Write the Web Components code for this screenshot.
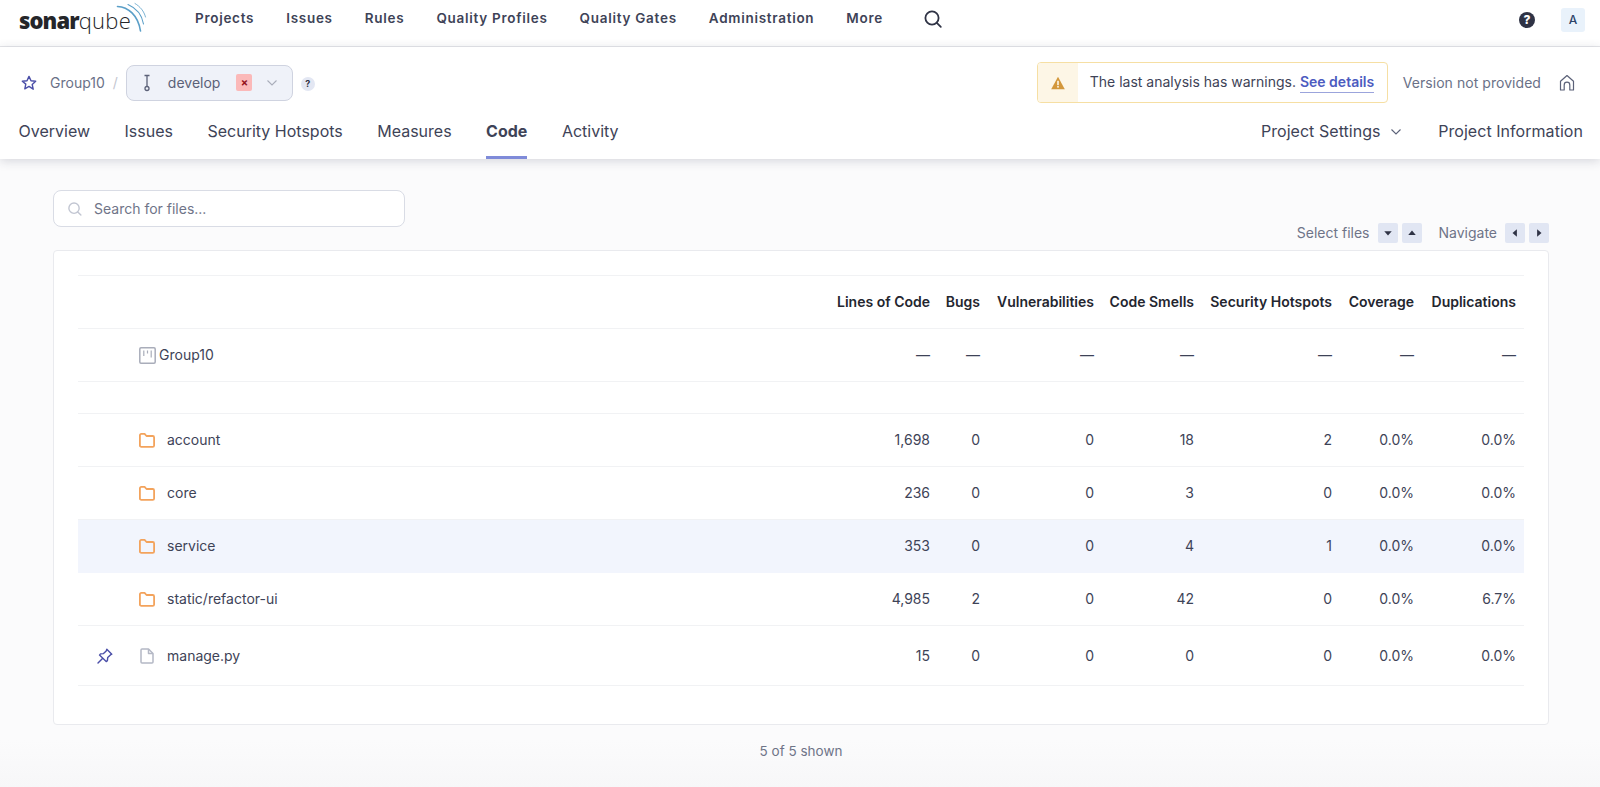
<!DOCTYPE html>
<html lang="en">
<head>
<meta charset="utf-8">
<title>Group10 - Code</title>
<style>
	html, body { margin: 0; height: 100%; }
	body {
		width: 1600px;
		height: 787px;
		overflow: hidden;
		background: linear-gradient(#fbfbfc 740px, #f7f7f8 787px);
		font-family: Inter, "Liberation Sans", sans-serif;
		color: #3e4357;
	}
</style>
</head>
<body>

<sq-navbar></sq-navbar>
<sq-project-header></sq-project-header>
<sq-code-page>
	<sq-search slot="search" placeholder="Search for files..."></sq-search>
	<sq-shortcuts slot="shortcuts"></sq-shortcuts>
	<sq-code-row kind="head" name="" values="Lines of Code|Bugs|Vulnerabilities|Code Smells|Security Hotspots|Coverage|Duplications"></sq-code-row>
	<sq-code-row kind="project" name="Group10" values="—|—|—|—|—|—|—"></sq-code-row>
	<sq-code-row kind="gap"></sq-code-row>
	<sq-code-row kind="folder" name="account" values="1,698|0|0|18|2|0.0%|0.0%"></sq-code-row>
	<sq-code-row kind="folder" name="core" values="236|0|0|3|0|0.0%|0.0%"></sq-code-row>
	<sq-code-row kind="folder" selected name="service" values="353|0|0|4|1|0.0%|0.0%"></sq-code-row>
	<sq-code-row kind="folder" name="static/refactor-ui" values="4,985|2|0|42|0|0.0%|6.7%"></sq-code-row>
	<sq-code-row kind="file" name="manage.py" values="15|0|0|0|0|0.0%|0.0%"></sq-code-row>
</sq-code-page>

<script>
	const ICONS = {
		search: '<svg width="20" height="20" viewBox="0 0 20 20" fill="none" stroke="currentColor" stroke-width="1.8" stroke-linecap="round"><circle cx="9" cy="9" r="6.6"/><path d="M13.8 13.8l4 4"/></svg>',
		star: '<svg width="16" height="16" viewBox="0 0 16 16" fill="none" stroke="#4b4fa8" stroke-width="1.4" stroke-linejoin="round"><path d="M8 1.400l2 4.400 4.700.5-3.500 3.200 1 4.700L8 11.400l-4.200 2.400 1-4.700L1.300 6.300 6 5.800z"/></svg>',
		branch: '<svg width="10" height="18" viewBox="0 0 10 18" fill="none" stroke="#5b6178" stroke-width="1.300"><path d="M2.500 1.500h5M5 1.500v11"/><circle cx="5" cy="14.500" r="2"/></svg>',
		chevron: '<svg width="12" height="8" viewBox="0 0 12 8" fill="none" stroke="currentColor" stroke-width="1.100"><path d="M1.500 1.500L6 6l4.500-4.500"/></svg>',
		warning: '<svg width="14" height="14" viewBox="0 0 14 14"><path d="M7 .8L13.800 13.200H.2z" fill="#d3973b"/><rect x="6.200" y="4.800" width="1.600" height="4.400" fill="#fdf6e6"/><rect x="6.200" y="10" width="1.600" height="1.600" fill="#fdf6e6"/></svg>',
		home: '<svg width="16" height="18" viewBox="0 0 16 18" fill="none" stroke="#5b6178" stroke-width="1.200" stroke-linejoin="round"><path d="M1.500 16V7.200L8 1.500l6.500 5.700V16h-3.700v-5a2.800 2.800 0 0 0-5.600 0v5z"/></svg>',
		project: '<svg width="17" height="17" viewBox="0 0 17 17" fill="none" stroke="#a9adba" stroke-width="1.500"><rect x=".8" y=".8" width="15.400" height="15.400" rx="1.200"/><path d="M4.800 3.500v5.500M8.500 3.500v3M12.200 3.500v7" stroke-width="1.200"/></svg>',
		folder: '<svg width="16" height="15" viewBox="0 0 16 15" fill="none" stroke="#f3a35c" stroke-width="1.800" stroke-linejoin="round"><path d="M.9 2.300c0-.8.6-1.400 1.400-1.400h3.300l1.900 2.100h6.200c.8 0 1.400.6 1.400 1.400v8c0 .8-.6 1.400-1.400 1.400H2.300c-.8 0-1.400-.6-1.400-1.400z"/></svg>',
		file: '<svg width="14" height="16" viewBox="0 0 14 16" fill="none" stroke="#b4b8c5" stroke-width="1.500" stroke-linejoin="round"><path d="M1 2c0-.6.400-1 1-1h6.500L13 5.500V14c0 .6-.4 1-1 1H2c-.6 0-1-.4-1-1z"/><path d="M8.500 1v4.500H13"/></svg>',
		pin: '<svg width="16" height="16" viewBox="0 0 16 16" fill="none" stroke="#4b4fa8" stroke-width="1.400" stroke-linejoin="round" stroke-linecap="round"><path d="M9.800 1.200l5 5-1.400.7-2.700 2.700-.3 3-1.200 1L2.500 7.100l1-1.200 3-.3 2.700-2.700z"/><path d="M5.500 10.500L1 15"/></svg>'
	};

	class SqLogo extends HTMLElement {
		constructor() {
			super();
			this.attachShadow({mode: 'open'}).innerHTML = `
				<style>
					:host { display: block; position: relative; width: 128px; height: 36px; }
					.word { position: absolute; left: 1px; top: 7px; font: 800 22px/26px "Open Sans", sans-serif; color: #25262a; letter-spacing: -0.9px; white-space: nowrap; }
					.word span { font-weight: 300; color: #25262a; letter-spacing: .3px; }
					svg { position: absolute; left: 97px; top: 0; }
				</style>
				<div class="word">sonar<span>qube</span></div>
				<svg width="34" height="34" viewBox="0 0 34 34" fill="none" stroke="#5a9fc8" stroke-linecap="round">
					<path d="M2.500 6.500C13 7 23 15 25.500 31" stroke-width="1.600"/>
					<path d="M13 4.500C21 8 27 15 28.500 24" stroke-width="1.100"/>
					<path d="M20 3.500C25 6.500 29 11 30.500 17" stroke-width=".8"/>
				</svg>`;
		}
	}

	class SqNavbar extends HTMLElement {
		constructor() {
			super();
			const links = ['Projects', 'Issues', 'Rules', 'Quality Profiles', 'Quality Gates', 'Administration', 'More'];
			this.attachShadow({mode: 'open'}).innerHTML = `
				<style>
					:host { display: flex; align-items: flex-start; box-sizing: border-box; height: 47px; padding: 0 15px 0 18px; background: #fff; border-bottom: 1px solid #e6e7ea; }
					nav { display: flex; gap: 32px; margin-left: 49px; padding-top: 10px; }
					a { font: 600 13.5px/17px Inter, sans-serif; color: #3e4357; letter-spacing: .72px; white-space: nowrap; }
					.search { margin: 9px 0 0 40px; color: #2f3345; height: 20px; }
					.right { margin-left: auto; display: flex; align-items: center; gap: 26px; padding-top: 8px; }
					.help { width: 16px; height: 16px; border-radius: 50%; background: #2f3345; color: #fff; font: 800 12px/16px Inter, sans-serif; text-align: center; }
					.avatar { width: 24px; height: 24px; border-radius: 3px; background: #e9f2fb; color: #2c4468; font: 500 12px/24px Inter, sans-serif; text-align: center; }
				</style>
				<sq-logo></sq-logo>
				<nav>${links.map(l => `<a>${l}</a>`).join('')}</nav>
				<span class="search">${ICONS.search}</span>
				<div class="right"><div class="help">?</div><div class="avatar">A</div></div>`;
		}
	}

	class SqBranchPill extends HTMLElement {
		constructor() {
			super();
			this.attachShadow({mode: 'open'}).innerHTML = `
				<style>
					:host { display: flex; align-items: center; box-sizing: border-box; width: 167px; height: 36px; padding-left: 15px; background: #eff2f9; border: 1px solid #cfd3e0; border-radius: 8px; color: #5b6178; font: 400 14px/18px Inter, sans-serif; }
					svg { display: block; }
					.name { margin-left: 16px; }
					.bad { width: 16px; height: 17px; margin-left: 16px; background: #fbb9b9; border-radius: 2px; color: #93131d; font: 700 11px/16px Inter, sans-serif; text-align: center; }
					.chev { margin-left: 14px; color: #a9adba; display: flex; }
				</style>
				${ICONS.branch}
				<span class="name"><slot></slot></span>
				<span class="bad">×</span>
				<span class="chev">${ICONS.chevron}</span>`;
		}
	}

	class SqWarning extends HTMLElement {
		constructor() {
			super();
			this.attachShadow({mode: 'open'}).innerHTML = `
				<style>
					:host { display: flex; box-sizing: border-box; width: 351px; height: 41px; border: 1px solid #f6dfa3; border-radius: 4px; background: #fff; overflow: hidden; font: 400 14px/18px Inter, sans-serif; color: #3e4357; }
					.icon { flex: none; width: 40px; background: #fdf6e6; display: flex; align-items: center; justify-content: center; }
					.text { padding: 10px 0 0 12px; white-space: nowrap; }
					a { color: #4c5bc0; font-weight: 600; border-bottom: 1px solid #9ba4dc; padding-bottom: 2px; }
				</style>
				<div class="icon">${ICONS.warning}</div>
				<div class="text"><slot></slot> <a>See details</a></div>`;
		}
	}

	class SqProjectHeader extends HTMLElement {
		constructor() {
			super();
			const tabs = ['Overview', 'Issues', 'Security Hotspots', 'Measures', 'Code', 'Activity'];
			this.attachShadow({mode: 'open'}).innerHTML = `
				<style>
					:host { display: block; position: relative; box-sizing: border-box; height: 112px; padding: 15px 16px 0 18px; background: #fff; box-shadow: 0 2px 10px rgba(40, 45, 70, .18); }
					.top { display: flex; align-items: center; height: 41px; }
					.star { margin-left: 3px; display: flex; }
					.proj { margin-left: 13px; font: 400 14px/18px Inter, sans-serif; color: #6a7187; }
					.slash { margin: 0 8px 0 8px; font: 400 14px/18px Inter, sans-serif; color: #c3c6d0; }
					.q { margin: 3px 0 0 8px; width: 14px; height: 14px; border-radius: 50%; background: #e3e7f3; color: #2f3345; font: 700 9px/14px Inter, sans-serif; text-align: center; }
					.end { margin-left: auto; display: flex; align-items: center; }
					.version { margin-left: 15px; font: 400 14px/18px Inter, sans-serif; letter-spacing: .05px; color: #6a7187; white-space: nowrap; }
					.home { margin: 0 0 0 18px; display: flex; padding-right: 9px; }
					.tabs { display: flex; justify-content: space-between; margin: 4px 1px 0 0; }
					ul { display: flex; gap: 34.5px; margin: 0; padding: 0 0 0 .5px; list-style: none; }
					li { box-sizing: border-box; height: 52px; padding-top: 14px; font: 400 16px/20px Inter, sans-serif; color: #3e4357; white-space: nowrap; border-bottom: 3px solid transparent; }
					li.active { font-weight: 700; border-bottom-color: #7f8bd9; }
					.side { gap: 36px; letter-spacing: .05px; }
					.side svg { margin-left: 5px; vertical-align: 1px; color: #5b6178; }
				</style>
				<div class="top">
					<span class="star">${ICONS.star}</span>
					<span class="proj">Group10</span>
					<span class="slash">/</span>
					<sq-branch-pill>develop</sq-branch-pill>
					<span class="q">?</span>
					<div class="end">
						<sq-warning>The last analysis has warnings.</sq-warning>
						<span class="version">Version not provided</span>
						<span class="home">${ICONS.home}</span>
					</div>
				</div>
				<div class="tabs">
					<ul>${tabs.map(t => `<li class="${t === 'Code' ? 'active' : ''}">${t}</li>`).join('')}</ul>
					<ul class="side"><li>Project Settings ${ICONS.chevron}</li><li>Project Information</li></ul>
				</div>`;
		}
	}

	class SqSearch extends HTMLElement {
		constructor() {
			super();
			this.attachShadow({mode: 'open'}).innerHTML = `
				<style>
					:host { display: flex; align-items: center; align-self: flex-start; box-sizing: border-box; width: 352px; height: 37px; padding-left: 13px; background: #fff; border: 1px solid #d9dce5; border-radius: 8px; font: 400 14px/18px Inter, sans-serif; color: #6f7488; }
					.ico { display: flex; color: #c2c6d2; transform: scale(.78); transform-origin: left center; }
					.ph { margin-left: 7px; }
				</style>
				<span class="ico">${ICONS.search}</span>
				<span class="ph">${this.getAttribute('placeholder')}</span>`;
		}
	}

	class SqShortcuts extends HTMLElement {
		constructor() {
			super();
			const key = (d) => `<span class="key"><svg width="10" height="10" viewBox="0 0 8 8"><path d="${d}" fill="#2f3345"/></svg></span>`;
			this.attachShadow({mode: 'open'}).innerHTML = `
				<style>
					:host { display: flex; align-items: center; height: 20px; font: 400 14px/20px Inter, sans-serif; color: #6f7488; white-space: nowrap; }
					.key { display: flex; align-items: center; justify-content: center; width: 20px; height: 20px; margin-left: 4px; border-radius: 2px; background: #e1e6f3; }
					.label { margin-right: 5px; }
					.label.nav { margin-left: 16px; margin-right: 4px; }
				</style>
				<span class="label">Select files</span>
				${key('M1 2.500h6L4 6z')}${key('M1 5.500h6L4 2z')}
				<span class="label nav">Navigate</span>
				${key('M5.500 1v6L2 4z')}${key('M2.500 1v6L6 4z')}`;
		}
	}

	class SqCodeRow extends HTMLElement {
		constructor() {
			super();
			const kind = this.getAttribute('kind');
			const name = this.getAttribute('name') || '';
			const values = (this.getAttribute('values') || '').split('|');
			const icon = {project: ICONS.project, folder: ICONS.folder, file: ICONS.file}[kind] || '';
			const cells = kind === 'gap' ? '' : `
				<div class="pin">${kind === 'file' ? ICONS.pin : ''}</div>
				<div class="name">${icon}<span>${name}</span></div>
				${values.map(v => `<div class="val">${v}</div>`).join('')}`;
			this.attachShadow({mode: 'open'}).innerHTML = `
				<style>
					:host { display: grid; grid-template-columns: 61px 1fr 110px 50px 114px 100px 138px 82px 102px; align-items: center; box-sizing: border-box; height: 53px; padding-right: 8px; border-bottom: 1px solid #f1f2f4; font: 400 14px/18px Inter, sans-serif; color: #3e4357; }
					:host([kind="gap"]) { height: 32px; }
					:host([kind="file"]) { height: 60px; }
					:host([kind="head"]) { font-weight: 600; color: #24262f; }
					:host([selected]) { background: #f2f5fd; border-bottom-color: #f2f5fd; }
					.pin { display: flex; padding-left: 19px; }
					.name { display: flex; align-items: center; gap: 12px; }
					:host([kind="project"]) .name { gap: 3px; }
					:host([kind="file"]) .name { padding-left: 1px; gap: 13px; }
					svg { display: block; flex: none; }
					.val { text-align: right; white-space: nowrap; }
				</style>${cells}`;
		}
	}

	class SqCodePage extends HTMLElement {
		constructor() {
			super();
			this.attachShadow({mode: 'open'}).innerHTML = `
				<style>
					:host { display: block; padding: 31px 51px 0 53px; }
					.bar { display: flex; justify-content: space-between; align-items: flex-end; height: 53px; }
					.card { box-sizing: border-box; height: 475px; margin-top: 7px; padding: 24px 24px 0 24px; background: #fff; border: 1px solid #e9eaee; border-radius: 4px; }
					.rows { border-top: 1px solid #f1f2f4; }
					.count { margin-top: 17px; text-align: center; font: 400 13.5px/18px Inter, sans-serif; color: #6f7488; }
				</style>
				<div class="bar"><slot name="search"></slot><slot name="shortcuts"></slot></div>
				<div class="card"><div class="rows"><slot></slot></div></div>
				<div class="count">5 of 5 shown</div>`;
		}
	}

	customElements.define('sq-logo', SqLogo);
	customElements.define('sq-navbar', SqNavbar);
	customElements.define('sq-branch-pill', SqBranchPill);
	customElements.define('sq-warning', SqWarning);
	customElements.define('sq-project-header', SqProjectHeader);
	customElements.define('sq-search', SqSearch);
	customElements.define('sq-shortcuts', SqShortcuts);
	customElements.define('sq-code-row', SqCodeRow);
	customElements.define('sq-code-page', SqCodePage);
</script>
</body>
</html>
